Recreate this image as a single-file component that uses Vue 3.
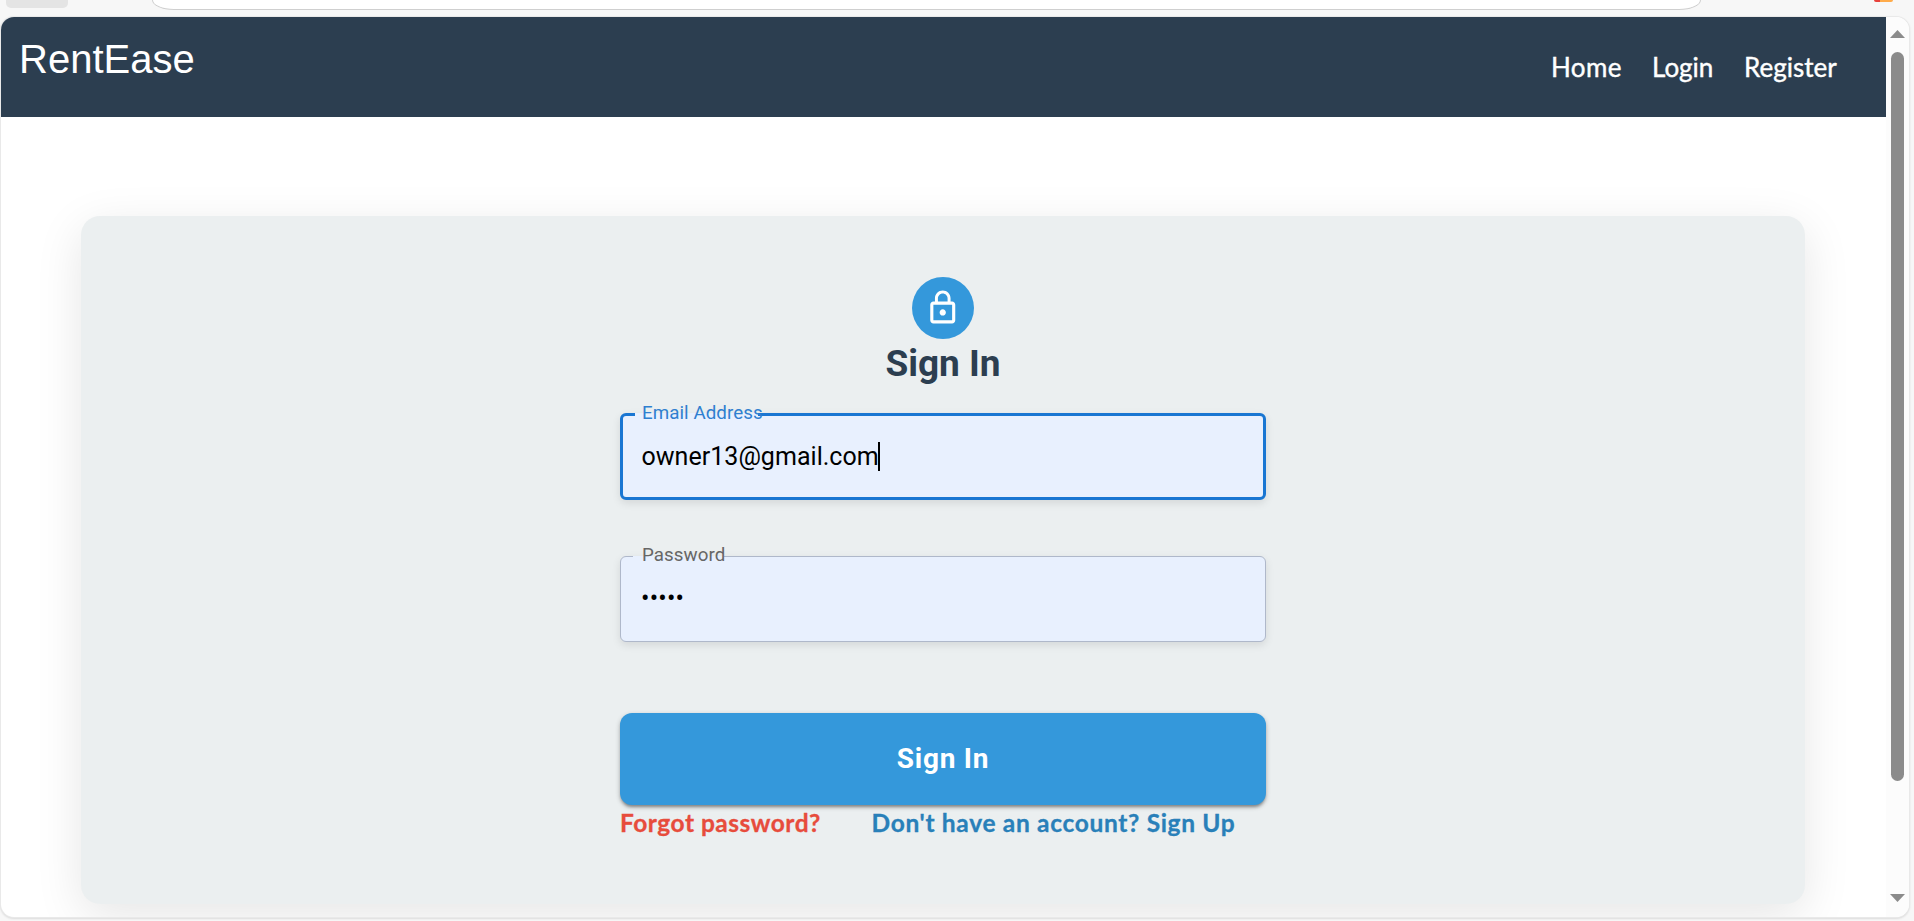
<script setup>
const links = ['Home', 'Login', 'Register']
</script>

<template>
  <div class="browser">
    <div class="toolbar">
      <div class="tool"></div>
      <div class="address"></div>
      <div class="ext"></div>
    </div>
    <div class="window">
      <div class="page">
        <header class="nav">
          <div class="brand">RentEase</div>
          <nav class="links">
            <a v-for="l in links" :key="l" :class="l.toLowerCase()">{{ l }}</a>
          </nav>
        </header>
        <main class="card">
          <div class="avatar">
            <svg viewBox="0 0 24 24" width="37.5" height="37.5" fill="#fff">
              <path d="M12 17c1.1 0 2-.9 2-2s-.9-2-2-2-2 .9-2 2 .9 2 2 2zm6-9h-1V6c0-2.760-2.240-5-5-5S7 3.240 7 6v2H6c-1.100 0-2 .9-2 2v10c0 1.100.9 2 2 2h12c1.100 0 2-.9 2-2V10c0-1.100-.9-2-2-2zM8.900 6c0-1.710 1.390-3.100 3.100-3.100s3.100 1.390 3.100 3.100v2H8.900V6zM18 20H6V10h12v10z" />
            </svg>
          </div>
          <h1>Sign In</h1>
          <form class="form">
            <div class="field email">
              <span class="notch"></span>
              <label>Email Address</label>
              <div class="value">owner13@gmail.com<i class="caret"></i></div>
            </div>
            <div class="field password">
              <span class="notch"></span>
              <label>Password</label>
              <div class="value dots">•••••</div>
            </div>
            <button type="button">Sign In</button>
            <div class="foot">
              <a class="forgot">Forgot password?</a>
              <a class="signup">Don't have an account? Sign Up</a>
            </div>
          </form>
        </main>
      </div>
      <div class="scroll">
        <svg width="15" height="8" viewBox="0 0 15 8"><path d="M7.500 0L15 8H0z" fill="#8b8b8b" /></svg>
        <div class="thumb"></div>
        <svg class="down" width="15" height="8" viewBox="0 0 15 8"><path d="M0 0h15L7.500 8z" fill="#8b8b8b" /></svg>
      </div>
    </div>
  </div>
</template>

<style>
body { margin: 0; overflow: hidden; }
</style>

<style scoped>
* { box-sizing: border-box; }
.browser {
  width: 1914px;
  height: 921px;
  background: #f7f7f7;
  overflow: hidden;
  font-family: Roboto, "Liberation Sans", sans-serif;
}
.toolbar { height: 17px; display: flex; align-items: flex-start; }
.tool { width: 62px; height: 8px; margin-left: 6px; background: #e4e4e4; border-radius: 0 0 5px 5px; }
.address {
  width: 1549px;
  height: 10px;
  margin-left: 84px;
  background: #fff;
  border: solid #cfcfcf;
  border-width: 0 1px 1.500px;
  border-radius: 0 0 22px 22px / 0 0 10px 10px;
}
.ext { width: 19px; height: 2px; margin-left: 173px; background: linear-gradient(90deg, #e8413b 30%, #ffab4a 30%); border-radius: 0 0 3px 3px; }
.window {
  width: 1908px;
  height: 900px;
  margin-left: 1px;
  display: flex;
  background: #fff;
  border-radius: 13px;
  overflow: hidden;
  box-shadow: 0 0 0 1px #e9e9e9, 0 1px 2px 1px #dcdcdc;
}
.page { width: 1885px; height: 900px; overflow: hidden; }
.scroll {
  width: 23px;
  height: 900px;
  padding: 13px 0 15px 4px;
  background: #fcfcfc;
  display: flex;
  flex-direction: column;
}
.thumb { width: 13px; height: 729px; margin: 14px 0 0 1px; border-radius: 7px; background: #8b8b8b; }
.down { margin-top: auto; }
.nav {
  height: 100px;
  background: #2c3e50;
  color: #fff;
  display: flex;
  justify-content: space-between;
}
.brand { font: 40px/46px "Liberation Sans", Arial, sans-serif; padding: 19px 0 0 18px; }
.links { display: flex; padding: 34px 50px 0 0; font: 26px/32px Lato, sans-serif; -webkit-text-stroke: 0.400px #fff; }
.links a { white-space: nowrap; }
.home { width: 101px; letter-spacing: 0.400px; }
.login { width: 92px; }
.register { width: 92px; }
.card {
  width: 1724px;
  height: 688px;
  margin: 99px 0 0 80px;
  padding-top: 61px;
  background: #ebeff0;
  border-radius: 19px;
  box-shadow: 0 12px 47px rgba(0, 0, 0, 0.1);
  display: flex;
  flex-direction: column;
  align-items: center;
}
.avatar {
  width: 62px;
  height: 62px;
  border-radius: 50%;
  background: #3498db;
  display: flex;
  align-items: center;
  justify-content: center;
}
h1 { margin: 0; height: 74px; font-size: 37px; line-height: 50px; font-weight: 700; color: #2c3e50; }
.form { width: 646px; display: flex; flex-direction: column; }
.field {
  position: relative;
  background: #e8f0fe;
  border-radius: 6px;
  box-shadow: 0 3px 8px rgba(0, 0, 0, 0.1);
}
.email { height: 87px; border: 3px solid #1976d2; }
.password { height: 86px; margin-top: 56px; border: 1px solid #afb8ca; }
.field label { position: absolute; font-size: 18.750px; line-height: 24px; white-space: nowrap; letter-spacing: 0.060px; }
.email label { left: 19px; top: -15px; color: #2f7fd0; }
.password label { left: 21px; top: -14px; color: #666; }
.notch { position: absolute; background: #e8f0fe; }
.email .notch { left: 12px; top: -3px; width: 123px; height: 3px; }
.password .notch { left: 12px; top: -1px; width: 91px; height: 1px; }
.value { display: flex; align-items: center; font-size: 25px; color: #000; }
.email .value { height: 81px; padding: 0 0 0 18.500px; letter-spacing: 0.030px; }
.caret { width: 2px; height: 29px; background: #000; margin-left: -1px; }
.dots { height: 82px; padding-left: 20px; font-size: 25px; letter-spacing: 0.200px; }
button {
  height: 92px;
  margin-top: 71px;
  padding: 0;
  border: 0;
  border-radius: 12px;
  background: #3498db;
  color: #fff;
  font: 700 28px/92px Roboto, sans-serif;
  letter-spacing: 0.750px;
  box-shadow: 0 3px 3px -1px rgba(0, 0, 0, 0.3), 0 2px 5px rgba(0, 0, 0, 0.24);
}
.foot { display: flex; font: 700 24.500px/36px Lato, sans-serif; white-space: nowrap; }
.forgot { width: 251.500px; color: #e74c3c; letter-spacing: 0.500px; -webkit-text-stroke: 0.300px #e74c3c; }
.signup { color: #2980b9; letter-spacing: 0.680px; -webkit-text-stroke: 0.300px #2980b9; }
</style>
